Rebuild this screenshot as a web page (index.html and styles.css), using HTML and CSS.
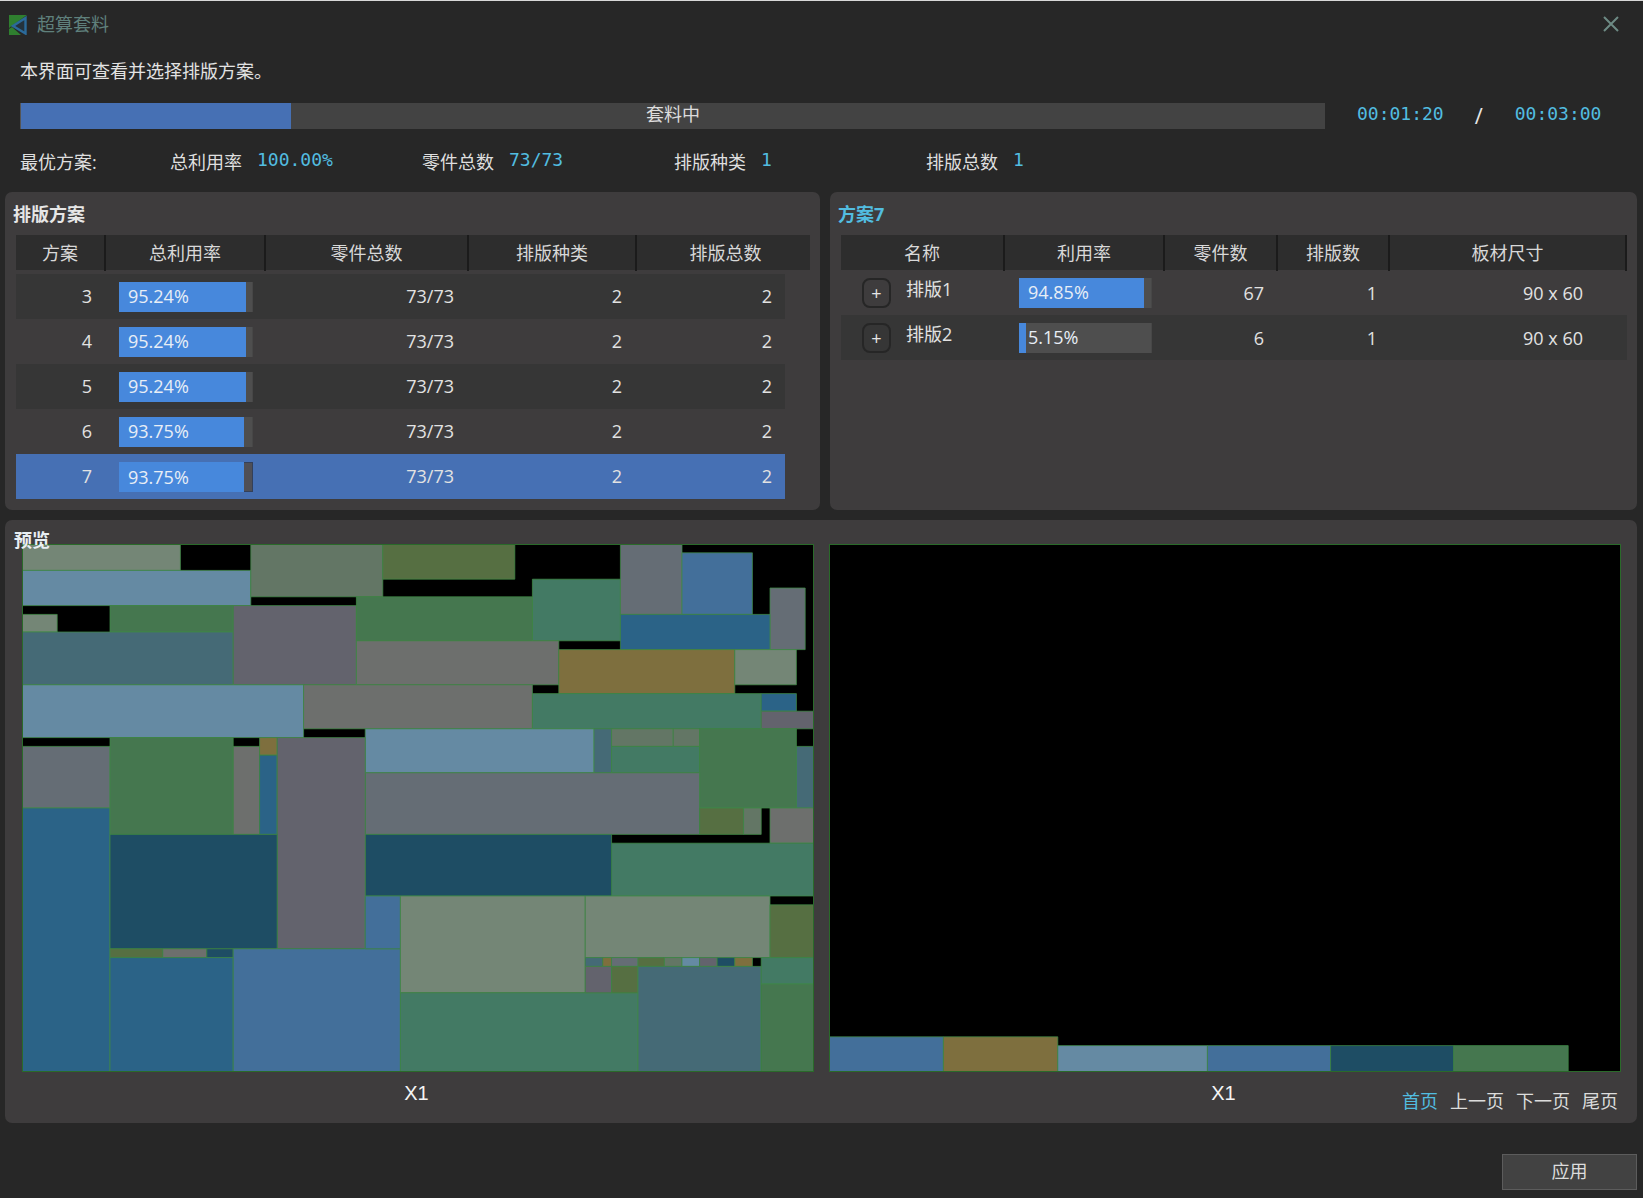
FILE: index.html
```html
<!DOCTYPE html>
<html lang="zh-CN">
<head>
<meta charset="utf-8">
<title>超算套料</title>
<link rel="stylesheet" href="styles.css">
</head>
<body>
<div class="window">
  <header class="titlebar">
    <svg class="logo" viewBox="0 0 18 20" width="18" height="20">
      <polygon class="logo-green" points="0,0 18,0 0,13"/>
      <polygon class="logo-green" points="0,14 3,12 12,20 0,20"/>
      <polygon class="logo-blue" points="16.5,3 16.5,18.5 4,11"/>
    </svg>
    <span class="title">超算套料</span>
    <svg class="close" viewBox="0 0 16 16" width="16" height="16">
      <path d="M1 1L15 15M15 1L1 15"/>
    </svg>
  </header>

  <p class="intro">本界面可查看并选择排版方案。</p>

  <div class="progress-row">
    <div class="progress">
      <div class="progress-fill" style="width:270px"></div>
      <span class="progress-text">套料中</span>
    </div>
    <span class="time time-a">00:01:20</span>
    <span class="slash">/</span>
    <span class="time time-b">00:03:00</span>
  </div>

  <div class="stats">
    <span class="stats-head">最优方案:</span>
    <div class="stat"><span>总利用率</span><b>100.00%</b></div>
    <div class="stat"><span>零件总数</span><b>73/73</b></div>
    <div class="stat"><span>排版种类</span><b>1</b></div>
    <div class="stat"><span>排版总数</span><b>1</b></div>
  </div>

  <div class="panels">
    <section class="panel">
      <h2 class="panel-title">排版方案</h2>
      <div class="thead thead-l">
        <div>方案</div><div>总利用率</div><div>零件总数</div><div>排版种类</div><div>排版总数</div>
      </div>
      <div class="rows-l">
        <div class="row row-l alt">
          <div class="num">3</div>
          <div class="barcell"><div class="bar"><div class="fill" style="width:95.24%"></div><span class="bar-text">95.24%</span></div></div>
          <div class="num">73/73</div><div class="num">2</div><div class="num">2</div>
        </div>
        <div class="row row-l">
          <div class="num">4</div>
          <div class="barcell"><div class="bar"><div class="fill" style="width:95.24%"></div><span class="bar-text">95.24%</span></div></div>
          <div class="num">73/73</div><div class="num">2</div><div class="num">2</div>
        </div>
        <div class="row row-l alt">
          <div class="num">5</div>
          <div class="barcell"><div class="bar"><div class="fill" style="width:95.24%"></div><span class="bar-text">95.24%</span></div></div>
          <div class="num">73/73</div><div class="num">2</div><div class="num">2</div>
        </div>
        <div class="row row-l">
          <div class="num">6</div>
          <div class="barcell"><div class="bar"><div class="fill" style="width:93.75%"></div><span class="bar-text">93.75%</span></div></div>
          <div class="num">73/73</div><div class="num">2</div><div class="num">2</div>
        </div>
        <div class="row row-l selected">
          <div class="num">7</div>
          <div class="barcell"><div class="bar"><div class="fill" style="width:93.75%"></div><span class="bar-text">93.75%</span></div></div>
          <div class="num">73/73</div><div class="num">2</div><div class="num">2</div>
        </div>
      </div>
    </section>

    <section class="panel panel-r">
      <h2 class="panel-title accent">方案7</h2>
      <div class="thead thead-r">
        <div>名称</div><div>利用率</div><div>零件数</div><div>排版数</div><div>板材尺寸</div>
      </div>
      <div class="row row-r">
        <div class="namecell"><span class="plus">+</span><span class="name">排版1</span></div>
        <div class="bar bar-r"><div class="fill" style="width:94.85%"></div><span class="bar-text">94.85%</span></div>
        <div class="num">67</div><div class="num">1</div><div class="num">90 x 60</div>
      </div>
      <div class="row row-r alt">
        <div class="namecell"><span class="plus">+</span><span class="name">排版2</span></div>
        <div class="bar bar-r"><div class="fill" style="width:5.15%"></div><span class="bar-text">5.15%</span></div>
        <div class="num">6</div><div class="num">1</div><div class="num">90 x 60</div>
      </div>
    </section>
  </div>

  <section class="panel preview">
    <h2 class="panel-title preview-title">预览</h2>
    <div class="sheets">
      <div class="sheet">
        <svg class="board" viewBox="0 0 90 60" preserveAspectRatio="none">
          <rect class="sage" x="0" y="0" width="18" height="3"/>
          <rect class="lightblue" x="0" y="3" width="26" height="4"/>
          <rect class="greygreen" x="26" y="0" width="15" height="6"/>
          <rect class="olive" x="41" y="0" width="15" height="4"/>
          <rect class="teal" x="58" y="4" width="10" height="7"/>
          <rect class="bluegrey" x="68" y="0" width="7" height="8"/>
          <rect class="blue3" x="75" y="1" width="8" height="7"/>
          <rect class="bluegrey" x="85" y="5" width="4" height="7"/>
          <rect class="blue2" x="68" y="8" width="17" height="4"/>
          <rect class="green" x="10" y="7" width="14" height="3"/>
          <rect class="sage" x="0" y="8" width="4" height="2"/>
          <rect class="slate" x="0" y="10" width="24" height="6"/>
          <rect class="purple" x="24" y="7" width="14" height="9"/>
          <rect class="green" x="38" y="6" width="20" height="5"/>
          <rect class="gray" x="38" y="11" width="23" height="5"/>
          <rect class="lightblue" x="0" y="16" width="32" height="6"/>
          <rect class="gray" x="32" y="16" width="26" height="5"/>
          <rect class="brown" x="61" y="12" width="20" height="5"/>
          <rect class="sage" x="81" y="12" width="7" height="4"/>
          <rect class="teal" x="58" y="17" width="26" height="4"/>
          <rect class="blue2" x="84" y="17" width="4" height="2"/>
          <rect class="purple" x="84" y="19" width="6" height="2"/>
          <rect class="lightblue" x="39" y="21" width="26" height="5"/>
          <rect class="slate" x="65" y="21" width="2" height="5"/>
          <rect class="greygreen" x="67" y="21" width="7" height="2"/>
          <rect class="greygreen" x="74" y="21" width="3" height="2"/>
          <rect class="teal" x="67" y="23" width="10" height="3"/>
          <rect class="green" x="77" y="21" width="11" height="9"/>
          <rect class="slate" x="88" y="23" width="2" height="7"/>
          <rect class="bluegrey" x="39" y="26" width="38" height="7"/>
          <rect class="olive" x="77" y="30" width="5" height="3"/>
          <rect class="greygreen" x="82" y="30" width="2" height="3"/>
          <rect class="gray" x="85" y="30" width="5" height="4"/>
          <rect class="teal" x="67" y="34" width="23" height="6"/>
          <rect class="dark" x="39" y="33" width="28" height="7"/>
          <rect class="bluegrey" x="0" y="23" width="10" height="7"/>
          <rect class="blue2" x="0" y="30" width="10" height="30"/>
          <rect class="green" x="10" y="22" width="14" height="11"/>
          <rect class="gray" x="24" y="23" width="3" height="10"/>
          <rect class="brown" x="27" y="22" width="2" height="2"/>
          <rect class="blue2" x="27" y="24" width="2" height="9"/>
          <rect class="purple" x="29" y="22" width="10" height="24"/>
          <rect class="dark" x="10" y="33" width="19" height="13"/>
          <rect class="olive" x="10" y="46" width="6" height="1"/>
          <rect class="gray" x="16" y="46" width="5" height="1"/>
          <rect class="dark" x="21" y="46" width="3" height="1"/>
          <rect class="blue2" x="10" y="47" width="14" height="13"/>
          <rect class="blue3" x="24" y="46" width="19" height="14"/>
          <rect class="blue3" x="39" y="40" width="4" height="6"/>
          <rect class="sage" x="43" y="40" width="21" height="11"/>
          <rect class="sage" x="64" y="40" width="21" height="7"/>
          <rect class="teal" x="43" y="51" width="27" height="9"/>
          <rect class="slate" x="64" y="47" width="2" height="1"/>
          <rect class="brown" x="66" y="47" width="1" height="1"/>
          <rect class="bluegrey" x="67" y="47" width="3" height="1"/>
          <rect class="olive" x="70" y="47" width="3" height="1"/>
          <rect class="greygreen" x="73" y="47" width="2" height="1"/>
          <rect class="lightblue" x="75" y="47" width="2" height="1"/>
          <rect class="purple" x="77" y="47" width="2" height="1"/>
          <rect class="dark" x="79" y="47" width="2" height="1"/>
          <rect class="brown" x="81" y="47" width="2" height="1"/>
          <rect class="purple" x="64" y="48" width="3" height="3"/>
          <rect class="olive" x="67" y="48" width="3" height="3"/>
          <rect class="slate" x="70" y="48" width="14" height="12"/>
          <rect class="olive" x="85" y="41" width="5" height="6"/>
          <rect class="teal" x="84" y="47" width="6" height="3"/>
          <rect class="green" x="84" y="50" width="6" height="10"/>
        </svg>
        <div class="sheet-foot"><span></span><span class="sheet-label">X1</span><span></span></div>
      </div>
      <div class="sheet">
        <svg class="board" viewBox="0 0 90 60" preserveAspectRatio="none">
          <rect class="blue3" x="0" y="56" width="13" height="4"/>
          <rect class="brown" x="13" y="56" width="13" height="4"/>
          <rect class="lightblue" x="26" y="57" width="17" height="3"/>
          <rect class="blue3" x="43" y="57" width="14" height="3"/>
          <rect class="dark" x="57" y="57" width="14" height="3"/>
          <rect class="green" x="71" y="57" width="13" height="3"/>
        </svg>
        <div class="sheet-foot">
          <span></span>
          <span class="sheet-label">X1</span>
          <nav class="pager"><a class="current">首页</a><a>上一页</a><a>下一页</a><a>尾页</a></nav>
        </div>
      </div>
    </div>
  </section>

  <footer class="footer"><button class="apply">应用</button></footer>
</div>
</body>
</html>
```
FILE: styles.css
```css
* { box-sizing: border-box; }
html, body { margin: 0; padding: 0; }
body {
  background: #272727;
  color: #dfdfdf;
  font-family: "Open Sans", "Noto Sans CJK SC", sans-serif;
  font-size: 18px;
  line-height: 28px;
}
.window {
  width: 1643px;
  height: 1198px;
  border-top: 1px solid #d8d8d8;
  overflow: hidden;
}
.titlebar {
  height: 46px;
  display: flex;
  align-items: center;
  padding: 2px 24px 0 9px;
}
.logo { flex: none; }
.logo-green { fill: #2f7f2f; }
.logo-blue { fill: #24323c; stroke: #2b6a9a; stroke-width: 2.4; }
.title { margin-left: 10px; margin-bottom: 2px; color: #5f807c; }
.close { margin-left: auto; margin-bottom: 2px; }
.close path { fill: none; stroke: #6d8a84; stroke-width: 2; }

.intro { margin: 10px 0 0 20px; height: 28px; color: #e2e2e2; }

.progress-row {
  display: flex;
  align-items: center;
  margin: 18px 0 0 20px;
  height: 26px;
}
.progress {
  position: relative;
  width: 1305px;
  height: 26px;
  background: #434343;
  border-left: 1px solid #555;
  display: flex;
}
.progress-fill { background: #4670b4; }
.progress-text {
  position: absolute;
  left: 0; right: 0; top: 0;
  text-align: center;
  line-height: 22px;
  color: #dcdcdc;
}
.time {
  font-family: "DejaVu Sans Mono", monospace;
  color: #52bde0;
  margin-bottom: 4px;
}
.time-a { margin-left: 32px; }
.slash {
  margin-left: 31px;
  width: 13px;
  font-size: 22px;
  color: #e6e6e6;
  margin-bottom: 3px;
}
.time-b { margin-left: 27px; }

.stats {
  display: flex;
  align-items: center;
  margin: 19px 0 0 20px;
  height: 28px;
}
.stats-head { width: 150px; }
.stat { width: 252px; display: flex; }
.stat b {
  margin-left: 15px;
  margin-top: -2px;
  font-family: "DejaVu Sans Mono", monospace;
  font-weight: 400;
  color: #52bde0;
}

.panels {
  display: grid;
  grid-template-columns: 815px 807px;
  column-gap: 10px;
  margin: 16px 0 0 5px;
}
.panel {
  background: #3e3c3d;
  border-radius: 7px;
  height: 318px;
  padding: 0 10px 0 11px;
}
.panel-title {
  margin: 0 0 0 -3px;
  height: 43px;
  font-size: 18px;
  line-height: 44px;
  font-weight: 700;
  color: #e6e6e6;
}
.accent { color: #52bde0; }

.thead {
  display: grid;
  height: 35px;
  background: #2d2d2d;
  line-height: 36px;
  text-align: center;
  color: #d8d8d8;
}
.thead > div { border-right: 2px solid #1b1b1b; }
.thead-l { grid-template-columns: 90px 160px 203px 168px 174px; }
.thead-l > div:last-child { border-right: 0; padding-left: 3px; }
.thead-r { grid-template-columns: 164px 160px 113px 112px 237px; }

.rows-l { margin-top: 4px; width: 769px; }
.row { display: grid; height: 45px; align-items: center; line-height: 26px; }
.row-l { grid-template-columns: 76px 174px 188px 168px 150px; }
.row-l .num { padding-bottom: 2px; }
.row-r { grid-template-columns: 178px 133px 112px 113px 206px; }
.alt { background: #363636; }
.selected { background: #4670b4; }
.num { text-align: right; color: #e2e2e2; }
.barcell { padding-left: 27px; }

.bar {
  position: relative;
  width: 134px;
  height: 30px;
  display: flex;
  background: #4e4e4e;
  border-right: 1px solid #474747;
}
.bar-r { width: 133px; }
.fill { background: #4788dc; }
.selected .bar { background: #4f4f56; border: 1px solid #33405a; border-left: 0; }
.selected .fill { margin: -1px 0; }
.bar-text {
  position: absolute;
  left: 9px;
  top: 0;
  line-height: 28px;
  color: #e8eef6;
}
.namecell { display: flex; align-items: center; padding-left: 21px; }
.plus {
  width: 29px;
  height: 30px;
  border: 2px solid #262626;
  border-radius: 8px;
  text-align: center;
  line-height: 26px;
  color: #e6e6e6;
}
.name { margin: 0 0 8px 15px; color: #e2e2e2; }

.preview {
  height: 603px;
  margin: 10px 0 0 5px;
  width: 1632px;
  padding: 0 16px 0 17px;
  position: relative;
}
.preview-title {
  position: absolute;
  left: 9px;
  top: 0;
  height: auto;
  margin: 0;
  line-height: 40px;
  color: #e8eef2;
  z-index: 1;
}
.sheets {
  display: grid;
  grid-template-columns: 792px 792px;
  column-gap: 15px;
  padding-top: 24px;
}
.board {
  display: block;
  width: 792px;
  height: 528px;
  background: #000;
  outline: 1px solid #2a6a2a;
  outline-offset: -1px;
}
.board rect {
  stroke: #3f8a45;
  stroke-opacity: .75;
  stroke-width: 1px;
  vector-effect: non-scaling-stroke;
}
.sage { fill: #748676; }
.lightblue { fill: #658aa3; }
.greygreen { fill: #637665; }
.olive { fill: #566f42; }
.teal { fill: #437a64; }
.bluegrey { fill: #656d75; }
.blue3 { fill: #436f9a; }
.blue2 { fill: #2b6387; }
.green { fill: #45774f; }
.slate { fill: #456a76; }
.purple { fill: #63636d; }
.gray { fill: #6d6f6d; }
.brown { fill: #7e6f3e; }
.dark { fill: #1e4d64; }

.sheet-foot {
  display: grid;
  grid-template-columns: 1fr auto 1fr;
  padding-top: 7px;
}
.sheet-label {
  font-family: "Liberation Sans", sans-serif;
  font-size: 20px;
  color: #f4f4f4;
  margin-right: 3px;
}
.pager {
  display: flex;
  justify-content: flex-end;
  gap: 12px;
  padding: 8px 3px 0 0;
}
.pager a { color: #dcdcdc; }
.pager .current { color: #52bde0; }

.footer {
  display: flex;
  justify-content: flex-end;
  padding: 31px 6px 0 0;
}
.apply {
  width: 135px;
  height: 36px;
  background: #424242;
  border: 1px solid #5c5c5c;
  color: #dcdcdc;
  font: inherit;
  line-height: 30px;
  padding: 0 0 2px;
}
```
